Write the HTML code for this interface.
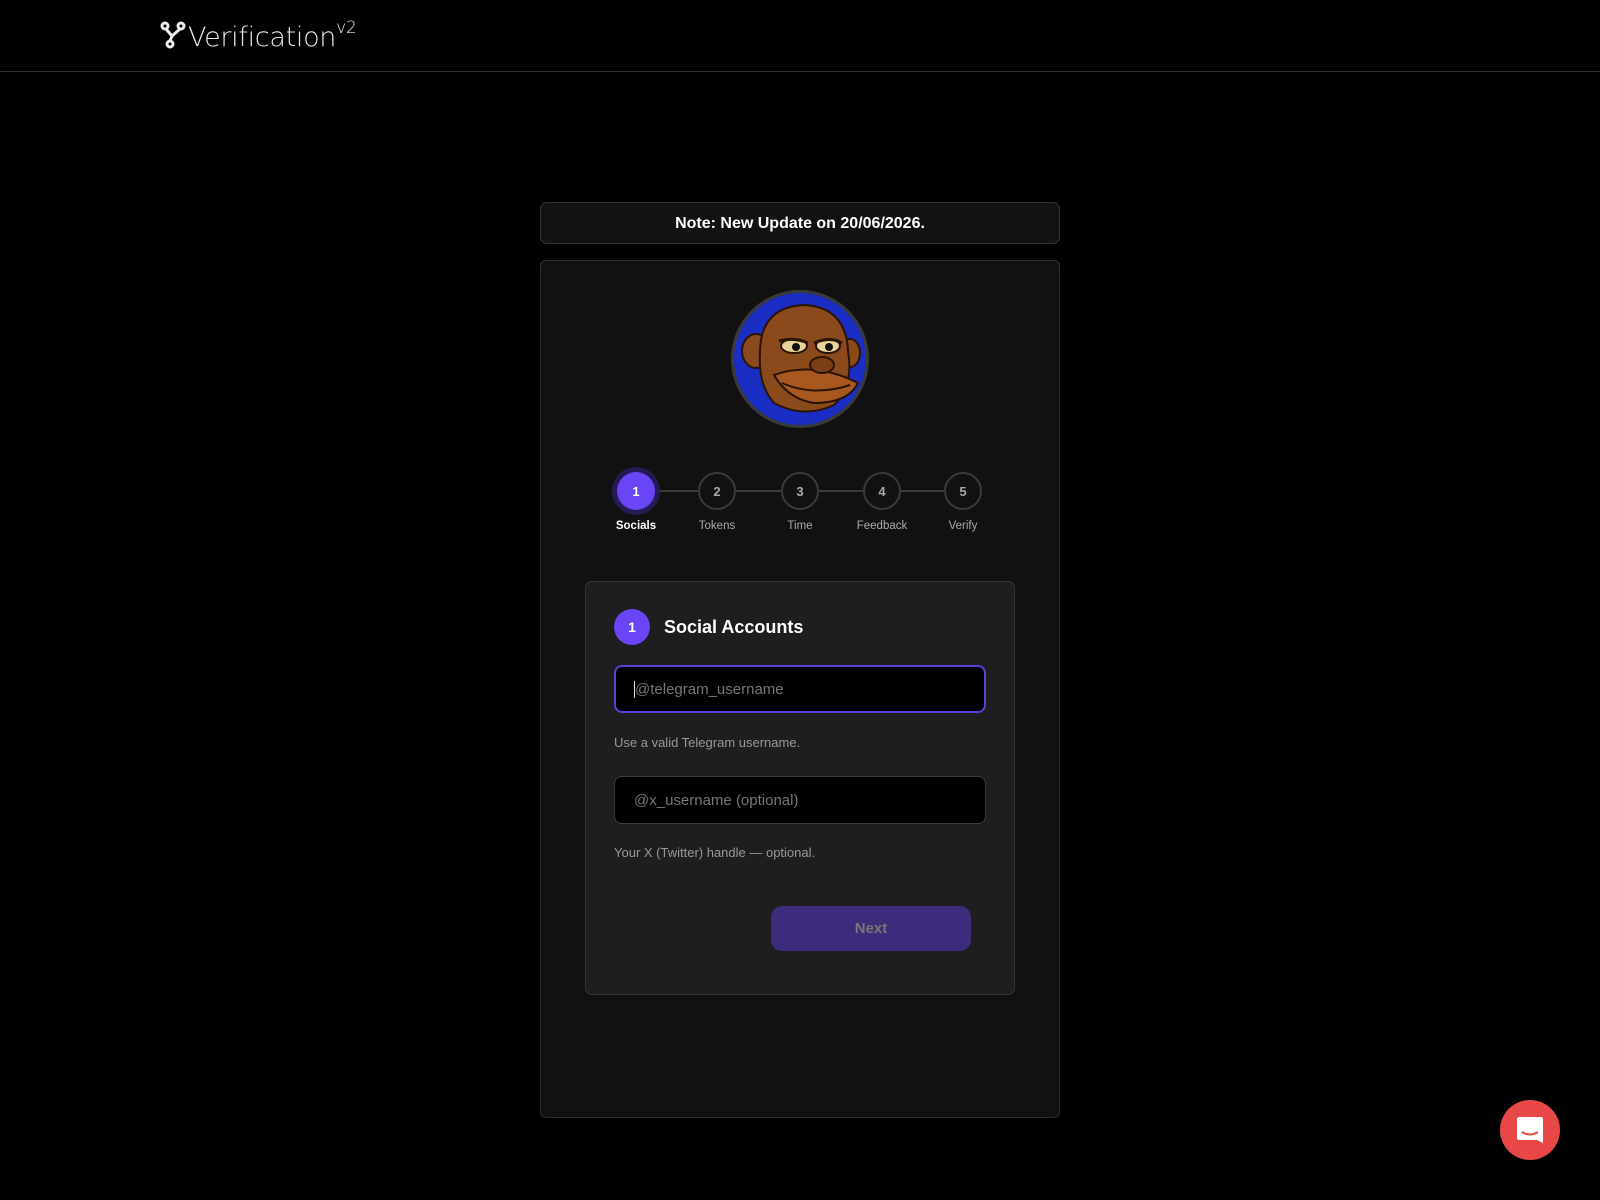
<!DOCTYPE html>
<html><head><meta charset="utf-8"><style>
*{box-sizing:border-box;margin:0;padding:0}
body{width:1600px;height:1200px;background:#000;font-family:"Liberation Sans",sans-serif;position:relative;overflow:hidden;color:#fff}
.hdr{position:absolute;left:0;top:0;width:1600px;height:72px;border-bottom:1px solid #333}
.logo{position:absolute;left:160px;top:21px;font-family:"DejaVu Sans",sans-serif;font-weight:200;font-size:27px;color:#e8e8e8;letter-spacing:-0.3px}
.logo sup{font-size:17px;position:relative;top:-3px}
.note{position:absolute;left:540px;top:202px;width:520px;height:42px;background:#121212;border:1px solid #333;border-radius:7px;text-align:center;line-height:41px;font-weight:bold;font-size:16px}
.card{position:absolute;left:540px;top:260px;width:520px;height:858px;background:#111;border:1px solid #2e2e2e;border-radius:6px}
.av{position:absolute;left:731px;top:290px;width:138px;height:138px;border-radius:50%;background:#1a2ec4;border:3px solid #3a3a3a;overflow:hidden}
.step{position:absolute;width:38px;height:38px;border-radius:50%;border:2px solid #3a3a3a;color:#aaa;font-weight:bold;font-size:13px;text-align:center;line-height:35px}
.step.a{background:#6a45f5;border:none;line-height:39px;color:#fff;box-shadow:0 0 0 5px #241a55}
.ln{position:absolute;top:490px;height:2px;background:#3a3a3a}
.lbl{position:absolute;top:520px;width:90px;text-align:center;font-size:11.5px;color:#aaa}
.inner{position:absolute;left:585px;top:581px;width:430px;height:414px;background:#1e1e20;border:1px solid #333;border-radius:7px}
.badge{position:absolute;left:614px;top:609px;width:36px;height:36px;border-radius:50%;background:#6a45f5;text-align:center;line-height:36px;font-weight:bold;font-size:14px}
.ttl{position:absolute;left:664px;top:617px;font-size:18px;font-weight:bold}
.inp{position:absolute;left:614px;width:372px;height:48px;background:#000;border:1px solid #3a3a3a;border-radius:8px;padding-left:19px;line-height:47px;font-size:15px;color:#777}
.inp.f{border:2px solid #5a40d8;line-height:46px;padding-left:18px}
.help{position:absolute;left:614px;font-size:13px;color:#999}
.btn{position:absolute;left:771px;top:906px;width:200px;height:45px;background:#3d2b7c;border-radius:11px;text-align:center;line-height:45px;color:#777;font-weight:bold;font-size:15px}
.chat{position:absolute;left:1500px;top:1100px;width:60px;height:60px;border-radius:50%;background:#e84848}
</style></head><body>
<div class="hdr"><div class="logo"><svg width="26" height="28" viewBox="0 0 26 28" style="vertical-align:-3px;margin-right:2px"><g fill="none" stroke="#eee" stroke-width="3"><circle cx="5" cy="5" r="3"/><circle cx="21" cy="5" r="3"/><circle cx="10" cy="23" r="3"/><path d="M6 8 L12 15 L20 8 M12 15 L10 20"/></g></svg>Verification<sup>v2</sup></div></div>
<div class="note">Note: New Update on 20/06/2026.</div>
<div class="card"></div>
<div class="av"><svg width="132" height="132" viewBox="0 0 132 132">
<ellipse cx="22" cy="58" rx="14" ry="17" fill="#8a4a1c" stroke="#2a1408" stroke-width="2"/>
<ellipse cx="116" cy="60" rx="10" ry="14" fill="#8a4a1c" stroke="#2a1408" stroke-width="2"/>
<path d="M26 60 Q26 14 70 12 Q112 14 114 58 Q120 92 100 112 Q70 126 40 110 Q24 92 26 60Z" fill="#8a4a1c" stroke="#2a1408" stroke-width="2"/>
<path d="M40 82 Q80 68 124 90 Q114 110 80 110 Q54 106 40 82Z" fill="#a8581e" stroke="#2a1408" stroke-width="2"/>
<path d="M48 90 Q80 104 116 92" stroke="#2a1408" stroke-width="2" fill="none"/>
<ellipse cx="60" cy="53" rx="13" ry="7" fill="#e8d49a" stroke="#2a1408" stroke-width="2"/>
<ellipse cx="94" cy="53" rx="12" ry="7" fill="#e8d49a" stroke="#2a1408" stroke-width="2"/>
<circle cx="62" cy="54" r="4" fill="#111"/><circle cx="95" cy="54" r="4" fill="#111"/>
<path d="M45 48 Q60 44 74 50 M80 50 Q96 43 108 50" stroke="#2a1408" stroke-width="3" fill="none"/>
<ellipse cx="88" cy="72" rx="12" ry="8" fill="#7a3f16" stroke="#2a1408" stroke-width="2"/>
</svg></div>
<div class="ln" style="left:655px;width:44px"></div>
<div class="ln" style="left:736px;width:45px"></div>
<div class="ln" style="left:819px;width:44px"></div>
<div class="ln" style="left:901px;width:43px"></div>
<div class="step a" style="left:617px;top:472px">1</div>
<div class="step" style="left:698px;top:472px">2</div>
<div class="step" style="left:781px;top:472px">3</div>
<div class="step" style="left:863px;top:472px">4</div>
<div class="step" style="left:944px;top:472px">5</div>
<div class="lbl" style="left:591px;color:#fff;font-weight:bold">Socials</div>
<div class="lbl" style="left:672px">Tokens</div>
<div class="lbl" style="left:755px">Time</div>
<div class="lbl" style="left:837px">Feedback</div>
<div class="lbl" style="left:918px">Verify</div>
<div class="inner"></div>
<div class="badge">1</div>
<div class="ttl">Social Accounts</div>
<div class="inp f" style="top:665px"><span style="border-left:1px solid #ddd"></span>@telegram_username</div>
<div class="help" style="top:735px">Use a valid Telegram username.</div>
<div class="inp" style="top:776px">@x_username (optional)</div>
<div class="help" style="top:845px">Your X (Twitter) handle — optional.</div>
<div class="btn">Next</div>
<div class="chat"><svg width="60" height="60" viewBox="0 0 60 60"><path d="M19 17 H41 Q43 17 43 19 V43 L37 40 H19 Q17 40 17 38 V19 Q17 17 19 17Z" fill="#fff"/><path d="M22 32 Q30 37 38 32" stroke="#e84848" stroke-width="2" fill="none"/></svg></div>
</body></html>
